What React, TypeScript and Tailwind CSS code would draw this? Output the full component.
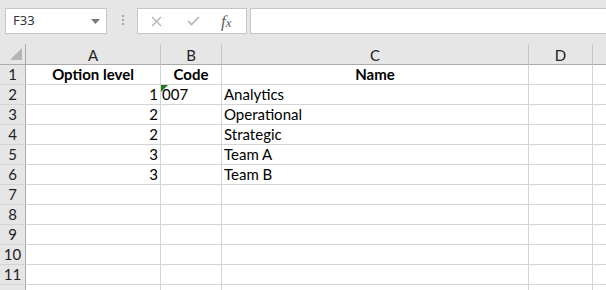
const COLS = [
  { id: "A", w: "w-[135px]" },
  { id: "B", w: "w-[61px]" },
  { id: "C", w: "w-[307px]" },
  { id: "D", w: "w-[64px]" },
];

type Row = { a?: string; b?: string; c?: string; head?: boolean };

const ROWS: Row[] = [
  { a: "Option level", b: "Code", c: "Name", head: true },
  { a: "1", b: "007", c: "Analytics" },
  { a: "2", c: "Operational" },
  { a: "2", c: "Strategic" },
  { a: "3", c: "Team A" },
  { a: "3", c: "Team B" },
  {}, {}, {}, {}, {}, {},
];

const cellFont = { fontFamily: "Lato, 'Open Sans', sans-serif" };

function Toolbar() {
  return (
    <div className="flex h-[44px] items-start bg-[#e6e6e6] pt-[8px]">
      <div className="ml-[5px] flex h-[26px] w-[102px] items-center justify-between border border-[#c6c6c6] bg-white pl-[7px] pr-[6px]">
        <span className="text-[13px] text-[#333]" style={{ fontFamily: "'Noto Sans', sans-serif" }}>F33</span>
        <svg width="9" height="5" viewBox="0 0 9 5"><path d="M0 0h9L4.5 5z" fill="#7a7a7a" /></svg>
      </div>
      <div className="ml-[15px] mt-[7px] flex flex-col gap-[2px]">
        <div className="h-[2px] w-[2px] bg-[#a6a6a6]" />
        <div className="h-[2px] w-[2px] bg-[#a6a6a6]" />
        <div className="h-[2px] w-[2px] bg-[#a6a6a6]" />
      </div>
      <div className="ml-[13px] flex h-[26px] w-[110px] items-center border border-[#c6c6c6] bg-white">
        <svg className="ml-[13px]" width="11" height="11" viewBox="0 0 11 11">
          <path d="M1 1L10 10M10 1L1 10" stroke="#b3b3b3" strokeWidth="1.3" />
        </svg>
        <svg className="ml-[25px]" width="13" height="10" viewBox="0 0 13 10">
          <path d="M1 5L4.5 8.5L12 1" stroke="#b3b3b3" strokeWidth="1.6" fill="none" />
        </svg>
        <span className="ml-[21px] text-[17px] italic leading-none text-[#606060]" style={{ fontFamily: "'Liberation Serif', serif" }}>
          f<span className="text-[13px]">x</span>
        </span>
      </div>
      <div className="ml-[3px] h-[26px] flex-1 border border-r-0 border-[#c6c6c6] bg-white" />
    </div>
  );
}

function HeaderRow() {
  return (
    <div className="flex h-[21px] bg-[#e6e6e6]">
      <div className="relative h-[21px] w-[26px] shrink-0 border-b border-r border-[#ababab]">
        <svg className="absolute left-0 top-0" width="25" height="20" viewBox="0 0 25 20">
          <path d="M10 16H22V4z" fill="#b4b4b4" />
        </svg>
      </div>
      {COLS.map((c) => (
        <div
          key={c.id}
          className={`${c.w} flex h-[21px] shrink-0 items-center justify-center border-b border-r border-b-[#ababab] border-r-[#c6c6c6] pt-[2px] text-[15px] text-[#222]`}
          style={cellFont}
        >
          {c.id}
        </div>
      ))}
      <div className="h-[21px] flex-1 border-b border-[#ababab]" />
    </div>
  );
}

function SheetRow({ row, n }: { row: Row; n: number }) {
  const bold = row.head ? "font-bold justify-center" : "";
  return (
    <div className="flex h-[20px]" style={cellFont}>
      <div className="flex h-[20px] w-[26px] shrink-0 items-end justify-center border-b border-r border-b-[#d4d4d4] border-r-[#ababab] bg-[#e6e6e6] pb-[1px] text-[15px] leading-[18px] text-[#222]">
        {n < 12 ? n : ""}
      </div>
      <div className={`flex h-[20px] w-[135px] shrink-0 items-end border-b border-r border-[#d4d4d4] px-[2px] pb-[1px] text-[15px] leading-[18px] text-black ${row.head ? "font-bold justify-center" : "justify-end"}`}>
        {row.a}
      </div>
      <div className={`relative flex h-[20px] w-[61px] shrink-0 items-end border-b border-r border-[#d4d4d4] px-[1px] pb-[1px] text-[15px] leading-[18px] text-black ${bold}`}>
        {row.b === "007" && (
          <svg className="absolute left-0 top-0" width="7" height="7" viewBox="0 0 7 7">
            <path d="M0 0H7L0 7z" fill="#1e7a1e" />
          </svg>
        )}
        {row.b}
      </div>
      <div className={`flex h-[20px] w-[307px] shrink-0 items-end border-b border-r border-[#d4d4d4] px-[2px] pb-[1px] text-[15px] leading-[18px] text-black ${bold}`}>
        {row.c}
      </div>
      <div className="h-[20px] w-[64px] shrink-0 border-b border-r border-[#d4d4d4]" />
      <div className="h-[20px] flex-1 border-b border-[#d4d4d4]" />
    </div>
  );
}

export default function App() {
  return (
    <div className="h-[290px] w-[606px] overflow-hidden bg-white">
      <Toolbar />
      <HeaderRow />
      {ROWS.map((r, i) => (
        <SheetRow key={i} row={r} n={i + 1} />
      ))}
    </div>
  );
}
